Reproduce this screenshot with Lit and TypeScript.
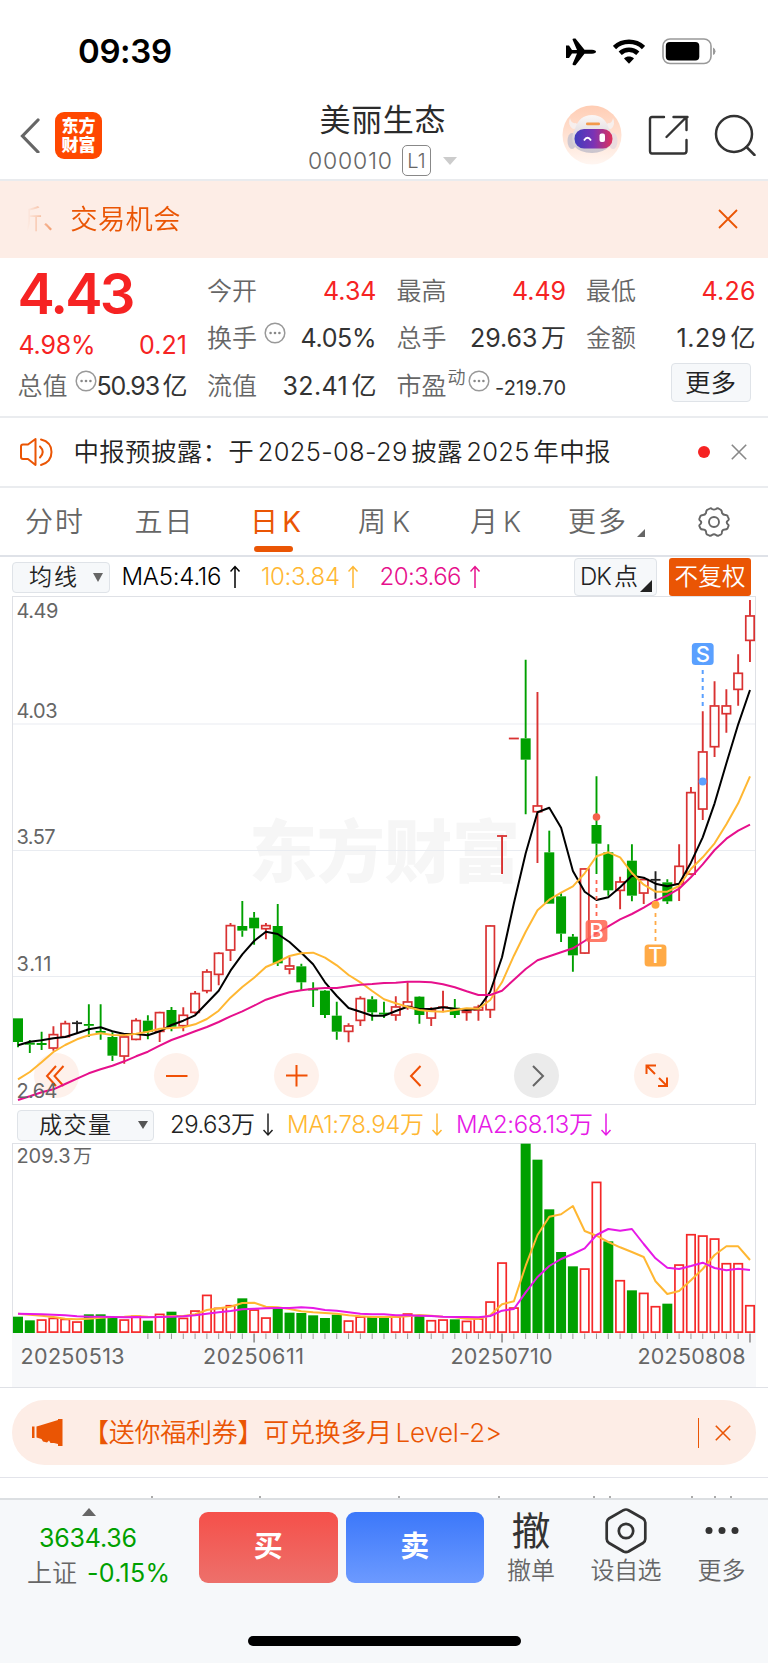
import { LitElement, html, svg, css } from "lit";
import { customElement, property } from "lit/decorators.js";

type Kind = "r" | "g" | "k";

/** Text set to an exact advance width by distributing letter spacing.
 *  Han and Latin runs are separated by a small gap unless `tight` is set. */
@customElement("fit-text")
class FitText extends LitElement {
  @property() t = "";
  @property({ type: Number }) w = 0;
  @property({ type: Boolean }) tight = false;
  static styles = css`
    :host { display: block; flex: none; white-space: pre; }
    span { display: inline-block; }
    i { font-style: normal; margin-left: 0.14em; }
  `;
  render() {
    const runs = this.tight ? [this.t] : this.t.match(/[\u3000-\u9fff\uff00-\uffef]+|[^\u3000-\u9fff\uff00-\uffef]+/g) ?? [];
    return html`<span>${runs.map((r, i) => (i ? html`<i>${r}</i>` : r))}</span>`;
  }
  updated() {
    const span = this.renderRoot.querySelector("span") as HTMLElement;
    span.style.letterSpacing = "0px";
    const natural = span.getBoundingClientRect().width;
    const n = Math.max(1, [...this.t].length - 1);
    const gap = (this.w - natural) / n;
    span.style.letterSpacing = gap + "px";
    this.style.width = this.w + "px";
  }
}

const STEP = 11.806;
const X0 = 18;
const cx = (i: number) => X0 + i * STEP;
const ky = (v: number) => 595 + v / 3;
const vy = (v: number) => 1100 + v / 3;

// kind, wick top, wick bottom, body top, body bottom
const CANDLES: [Kind, number, number, number, number][] = [
  ["g", 1270, 1357, 1270, 1341], ["g", 1335, 1374, 1343, 1349], ["g", 1310, 1365, 1344, 1350],
  ["r", 1294, 1367, 1318, 1360], ["r", 1277, 1328, 1285, 1326], ["k", 1277, 1314, 1283, 1286],
  ["g", 1228, 1326, 1287, 1292], ["g", 1228, 1334, 1308, 1313], ["g", 1312, 1398, 1326, 1382],
  ["r", 1322, 1406, 1325, 1384], ["r", 1270, 1336, 1276, 1334], ["g", 1261, 1333, 1277, 1311],
  ["r", 1250, 1341, 1252, 1310], ["g", 1236, 1309, 1245, 1295], ["r", 1237, 1309, 1260, 1293],
  ["r", 1188, 1256, 1195, 1253], ["r", 1123, 1195, 1130, 1188], ["r", 1072, 1171, 1074, 1139],
  ["r", 984, 1098, 991, 1066], ["g", 918, 1025, 993, 1007], ["g", 951, 1049, 968, 1000],
  ["r", 984, 1033, 991, 1002], ["g", 927, 1113, 993, 1105], ["r", 1087, 1138, 1112, 1123],
  ["g", 1106, 1185, 1114, 1162], ["g", 1162, 1236, 1181, 1185], ["g", 1185, 1269, 1187, 1260],
  ["g", 1220, 1334, 1262, 1310], ["r", 1285, 1342, 1292, 1310], ["r", 1204, 1293, 1210, 1277],
  ["g", 1204, 1277, 1213, 1252], ["g", 1220, 1269, 1253, 1258], ["r", 1204, 1277, 1235, 1261],
  ["r", 1162, 1244, 1220, 1235], ["g", 1204, 1286, 1205, 1260], ["r", 1237, 1293, 1244, 1270],
  ["r", 1187, 1252, 1235, 1238], ["g", 1212, 1269, 1238, 1260], ["r", 1244, 1277, 1247, 1253],
  ["r", 1229, 1277, 1236, 1246], ["r", 990, 1269, 992, 1245], ["r", 721, 837, 722, 724],
  ["r", 429, 431, 430, 431], ["g", 194, 658, 430, 494], ["r", 291, 804, 632, 651],
  ["g", 707, 926, 772, 926], ["g", 895, 1041, 904, 1016], ["g", 1017, 1130, 1025, 1081],
  ["r", 820, 1077, 821, 1075], ["g", 544, 837, 690, 746], ["g", 748, 902, 772, 886],
  ["r", 845, 943, 860, 887], ["g", 748, 919, 797, 902], ["r", 850, 927, 853, 895],
  ["k", 829, 911, 853, 856], ["g", 853, 927, 862, 919], ["r", 748, 918, 813, 868],
  ["r", 576, 841, 592, 838], ["r", 349, 675, 470, 643], ["r", 259, 486, 332, 456],
  ["r", 283, 413, 332, 357], ["r", 178, 332, 234, 284], ["r", 15, 201, 62, 137],
];

const MA5 = [1351,1340,1336,1330,1326,1315,1303,1297,1309,1317,1317,1321,1309,1290,1277,1261,1224,1187,1127,1078,1038,1010,1017,1041,1073,1108,1162,1203,1239,1250,1262,1262,1248,1235,1242,1242,1237,1241,1245,1241,1190,1087,925,775,652,638,698,828,890,915,907,877,842,848,866,874,866,803,727,625,505,388,285];
const MA10 = [1453,1431,1402,1371,1350,1333,1321,1315,1320,1321,1316,1310,1301,1299,1297,1288,1272,1247,1208,1176,1148,1116,1101,1083,1075,1073,1088,1111,1140,1162,1188,1213,1225,1236,1245,1249,1250,1245,1240,1241,1215,1162,1082,1010,946,914,893,874,835,784,772,787,834,869,890,890,873,822,787,745,688,625,544];
const MA20 = [1515,1504,1492,1483,1467,1451,1435,1423,1412,1399,1384,1370,1352,1335,1322,1309,1296,1281,1264,1249,1232,1214,1202,1192,1186,1181,1179,1179,1174,1169,1167,1164,1163,1160,1160,1162,1168,1177,1189,1200,1200,1187,1154,1122,1096,1084,1072,1060,1038,1014,994,973,957,938,917,902,881,847,808,765,731,707,689];

const VOLS = "g650 g661 r659 r654 r657 r665 g643 g643 g653 r659 r648 g662 r642 g635 r654 r632 r585 r624 r616 g595 r629 r653 g625 g638 g639 g646 g654 g644 r662 r650 g650 g651 r650 r641 g648 r661 r659 g658 r663 r656 r605 r488 r623 g131 g179 g328 g456 g499 r506 r246 g424 r541 g571 r579 r619 g611 r494 r403 r407 r416 r490 r490 r616"
  .split(" ")
  .map((s) => ({ kind: s[0] as Kind, top: Number(s.slice(1)) }));
const VMA1 = [641,644,647,651,656,658,656,653,651,650,648,650,651,648,648,643,630,625,620,609,608,620,622,627,634,637,639,641,646,649,651,651,651,649,645,647,650,652,656,657,646,613,604,497,405,350,343,318,393,407,426,442,456,471,544,582,573,541,507,465,439,439,480];
const VMA2 = [641,642,643,644,646,649,650,650,651,652,651,652,651,650,649,646,641,637,633,628,626,625,624,624,622,624,630,632,637,641,643,643,646,646,647,648,650,651,651,652,648,632,627,577,531,498,477,462,445,405,387,392,387,432,475,503,507,498,488,504,511,506,510];

const line = (vals: number[], y: (v: number) => number, color: string) =>
  svg`<polyline points=${vals.map((v, i) => `${cx(i).toFixed(1)},${y(v).toFixed(1)}`).join(" ")} fill="none" stroke=${color} stroke-width="2" stroke-linejoin="round"/>`;

const label = (x: number, y: number, w: number, text: string, size = 20) =>
  svg`<text x=${x} y=${y} font-size=${size} textLength=${w} fill="#666">${text}</text>`;

const COLORS = { r: "#d93232", g: "#00a000", k: "#222" };

const candle = ([k, hi, lo, top, bot]: [Kind, number, number, number, number], i: number) => {
  const x = cx(i), c = COLORS[k];
  const t = ky(top), b = ky(bot);
  const flat = bot - top < 4;
  return svg`
    <path d=${`M${x} ${ky(hi)}V${t}M${x} ${b}V${ky(lo)}`} stroke=${c} stroke-width="1.9"/>
    ${k === "r" && !flat
      ? svg`<rect x=${x - 4.2} y=${t + 0.3} width="8.4" height=${Math.max(b - t - 0.6, 1)} fill="none" stroke=${c} stroke-width="1.7"/>`
      : svg`<rect x=${x - 5} y=${flat ? (t + b) / 2 - 0.9 : t} width="10" height=${Math.max(b - t, 1.8)} fill=${c}/>`}`;
};

const tag = (i: number, y: number, color: string, ch: string, opacity = 1) =>
  svg`<g opacity=${opacity}><rect x=${cx(i) - 10.9} y=${y} width="21.8" height="22" rx="3.5" fill=${color}/>
  <text x=${cx(i)} y=${y + 18.8} font-size="22" font-weight="500" fill="#fff" text-anchor="middle">${ch}</text></g>`;

@customElement("kline-chart")
class KlineChart extends LitElement {
  static styles = css`
    :host { display: block; position: relative; height: 509px; }
    svg { display: block; }
    .plot { position: relative; z-index: 1; pointer-events: none; }
    text { font-family: Inter, "Noto Sans CJK SC", sans-serif; }
    .controls { position: absolute; left: 33.5px; bottom: 7px; display: flex; gap: 75.1px; }
    .btn { width: 45px; height: 45px; border-radius: 50%; background: #fef1eb; }
    .btn.off { background: #ebebeb; }
  `;
  render() {
    const icons = [
      "M22 13L13 23L22 33M29.5 13L20.5 23L29.5 33",
      "M12 23H33.5",
      "M12 22.5H33.5M22.5 12V33.5",
      "M26.5 13L17 23L26.5 33",
      "M19 13L29 23L19 33",
      "M12.5 21V12.5H22M12.5 12.5L21 21M33 24.500V33H24M33 33L25 25",
    ];
    return html`
      <svg class="plot" width="768" height="509" viewBox="0 596 768 509">
        <text x="249" y="877" font-size="68" font-weight="900" textLength="271" fill="#f6f6f6">东方财富</text>
        <path d="M12.500 724H756M12.500 850.500H756M12.500 976.500H756" stroke="#e9ecf1" stroke-width="1.200"/>
        <rect x="12.500" y="596.500" width="743" height="508" fill="none" stroke="#dfe1e6"/>
        ${label(16.5, 617.7, 42, "4.49")}${label(16.5, 717.7, 41, "4.03")}${label(16.5, 844, 39, "3.57")}
        ${label(16.5, 971, 35, "3.11")}
        ${CANDLES.map(candle)}
        ${line(MA5, ky, "#000")}${line(MA10, ky, "#ffb732")}${line(MA20, ky, "#e6108c")}
        <path d="M702.700 670V707" stroke="#5aa0ff" stroke-width="2" stroke-dasharray="4 4"/>
        <circle cx="702.700" cy="781.500" r="4" fill="#5aa0ff"/>
        <path d="M596.500 880V917" stroke="#ff6450" stroke-width="1.800" stroke-dasharray="4 4"/>
        <circle cx="596.500" cy="817" r="3.800" fill="#f5604c"/>
        <path d="M655.500 913V941" stroke="#ffaa46" stroke-width="1.800" stroke-dasharray="4 4"/>
        <circle cx="655.500" cy="904.700" r="4" fill="#ffa53c"/>
        ${tag(58, 643, "#5aa0ff", "S")}${tag(49, 920, "#ff6450", "B", 0.85)}${tag(54, 944.5, "#ffaa46", "T")}
        ${label(16.5, 1098, 41, "2.64")}
      </svg>
      <div class="controls">
        ${icons.map((d, i) => html`<div class="btn ${i === 4 ? "off" : ""}">
          <svg width="45" height="45" viewBox="0 0 45 45"><path d=${d} fill="none" stroke=${i === 4 ? "#666" : "#f05005"} stroke-width="2"/></svg>
        </div>`)}
      </div>`;
  }
}

@customElement("volume-chart")
class VolumeChart extends LitElement {
  static styles = css`
    :host { display: block; height: 245px; border-bottom: 1px solid #dfe1e6; box-sizing: border-box; }
    svg { display: block; }
    text { font-family: Inter, "Noto Sans CJK SC", sans-serif; font-weight: 400; }
  `;
  render() {
    return html`<svg width="768" height="244" viewBox="0 1143 768 244">
      <rect x="12.500" y="1143.500" width="743" height="189.500" fill="#fff" stroke="#dfe1e6"/>
      <rect x="12" y="1333" width="744" height="54.500" fill="#f7f8fa"/>
      ${label(16.5, 1163, 54, "209.3", 20)}${label(73, 1163, 19, "万", 19)}
      ${VOLS.map((v, i) => {
        const x = cx(i), t = vy(v.top), h = 1333 - t;
        return v.kind === "g"
          ? svg`<rect x=${x - 5} y=${t} width="10" height=${h} fill="#00a000"/>`
          : svg`<rect x=${x - 4.2} y=${t + 0.4} width="8.4" height=${h - 1.3} fill="#fff" stroke="#f52828" stroke-width="1.700"/>`;
      })}
      ${VOLS.map((_, i) => i < 11 ? null
        : svg`<path d=${`M${cx(i)} 1333.500V${i === 20 || i === 41 || i === 62 ? 1342.5 : 1339}`} stroke="#999" stroke-width=${i === 20 || i === 41 || i === 62 ? 1.8 : 1}/>`)}
      ${line(VMA1, vy, "#ffb732")}${line(VMA2, vy, "#e619e6")}
      ${label(20.5, 1363.6, 104, "20250513", 21.5)}${label(203, 1363.6, 101, "20250611", 21.5)}
      ${label(450.5, 1363.6, 102, "20250710", 21.5)}${label(637.5, 1363.6, 108, "20250808", 21.5)}
    </svg>`;
  }
}

const ft = (t: string, w: number, cls = "", tight = false) =>
  html`<fit-text class=${cls} .t=${t} .w=${w} .tight=${tight}></fit-text>`;
const dots = html`<svg class="info" width="22" height="22" viewBox="0 0 22 22"><circle cx="11" cy="11" r="9.800" fill="none" stroke="#999" stroke-width="1.500"/><g fill="#888"><circle cx="6.600" cy="11" r="1.300"/><circle cx="11" cy="11" r="1.300"/><circle cx="15.400" cy="11" r="1.300"/></g></svg>`;
const arrow = (up: boolean) => html`<svg width="11" height="24" viewBox="0 0 11 24"><path d=${up ? "M5 23V1.500M.5 6.500L5 1.500L9.500 6.500" : "M5 .5V22M.5 17L5 22L9.500 17"} fill="none" stroke="currentColor" stroke-width="1.500"/></svg>`;
const cross = (s: number, w: number) => html`<svg width=${s} height=${s} viewBox="0 0 20 20"><path d="M1 1L19 19M19 1L1 19" fill="none" stroke="currentColor" stroke-width=${w}/></svg>`;

@customElement("app-root")
class AppRoot extends LitElement {
  static styles = css`
    :host { display: block; width: 768px; height: 1663px; overflow: hidden; background: #fff; color: #333;
      font-family: Inter, "Noto Sans CJK SC", sans-serif; font-size: 25px; line-height: 30px; }
    * { box-sizing: border-box; }
    svg { display: block; flex: none; }
    .row { display: flex; align-items: center; }
    .status { height: 103px; padding: 0 52px 0 78px; justify-content: space-between; color: #000; }
    .clock { font-size: 33px; font-weight: 600; margin-top: -1px; }
    .wifi { margin: 0 17px; }
    .nav { height: 78px; display: grid; grid-template-columns: 280px 1fr 205px; border-bottom: 2px solid #e9ebee; padding: 0 12px 0 20px; }
    .nav .left { gap: 15px; padding-bottom: 11px; display: flex; align-items: center; height: 76px; }
    .logo { width: 47px; height: 47px; border-radius: 9px; background: #ff4800; color: #fff; font-size: 17px; font-weight: 900; line-height: 19px; padding: 5px 0 0 6.500px; }
    .title { padding-top: 1px; }
    .name { font-size: 31px; line-height: 32px; margin-left: 19.500px; font-weight: 400; color: #2b2b2b; }
    .code { height: 32px; margin: 8.500px 0 0 8px; color: #666; font-size: 23px; font-weight: 350; }
    .l1 { width: 29px; height: 31px; border: 1.500px solid #888; border-radius: 5px; margin: 0 12px 0 10px; display: flex; justify-content: center; align-items: center; font-size: 20px; }
    .tools { padding-bottom: 12px; height: 76px; gap: 25px; justify-content: flex-end; }
    .banner { height: 77px; padding: 0 30px 0 15px; color: #ea5504; background: #fdede6; justify-content: space-between; font-size: 27.300px; font-weight: 350; }
    .banner svg { margin-top: -1px; }
    .fade { mask-image: linear-gradient(90deg, transparent 12px, rgba(0,0,0,.45) 34px, #000 56px); -webkit-mask-image: linear-gradient(90deg, transparent 12px, rgba(0,0,0,.45) 34px, #000 56px); }
    .stats { height: 160px; display: flex; gap: 21px; padding: 9px 12.500px 0 18.500px; border-bottom: 2px solid #eaecef; font-weight: 400; }
    .col { flex: 1 1 0; min-width: 0; }
    .stats .row { height: 47.500px; justify-content: space-between; color: #333; }
    .stats .row .lab { color: #666; font-weight: 350; margin-left: -1px; }
    .lab, .val { display: flex; align-items: center; }
    .info { margin-left: 7px; margin-top: -10px; }
    .eff { margin-left: 2px; }
    .stats .red, .stats .row.red { color: #f62323; }
    .stats .price { height: 56px; font-size: 56px; font-weight: 600; line-height: 55px; color: #f62323; margin-left: -1px; }
    .stats .pct { height: 44px; }
    .stats .cap { height: 38px; }
    .small { font-size: 20px; padding-top: 5px; }
    .sup { font-size: 18px; margin: -16px 0 0 1px; }
    .stats .end { justify-content: flex-end; padding-right: 5px; }
    .more { width: 80px; height: 39px; border: 1.500px solid #dfe3e8; border-radius: 4px; background: #f6f8fa; display: flex; align-items: center; justify-content: center; font-size: 25.500px; margin-top: -6px; font-weight: 350; color: #222; }
    .notice { height: 70px; padding: 0 21px 0 19.500px; border-bottom: 2px solid #eaecef; font-size: 25.500px; color: #222; font-weight: 350; }
    .notice .txt { margin-left: 21px; flex: 1; }
    .grey { color: #888; }
    .dot { width: 12px; height: 12px; border-radius: 50%; background: #f62323; margin-right: 21px; }
    .tabs { height: 69px; border-bottom: 2px solid #dfe2e8; padding-left: 25px; color: #666; font-size: 28px; font-weight: 350; }
    .tab { height: 69px; display: flex; align-items: center; padding-top: 1px; }
    .tab.on { color: #ea5504; flex-direction: column; align-items: flex-start; padding: 20px 0 0 0; font-weight: 400; }
    .tabs .t1 { width: 109.500px; } .tabs .t2 { width: 115.500px; } .tabs .t3 { width: 108px; } .tabs .t4 { width: 112px; } .tabs .t5 { width: 98px; }
    .corner { margin: 22px 0 0 11px; }
    .gear { margin-left: 53px; }
    .bar { width: 39px; height: 5.500px; border-radius: 3px; background: #ea5504; margin: 9px 0 0 4px; }
    .bars { height: 39px; padding: 1px 17px 0 12px; font-weight: 350; font-size: 24px; color: #000; }
    .sel { height: 31px; border: 1.500px solid #dfe3e8; border-radius: 4px; background: #f6f8fa; display: flex; align-items: center; justify-content: space-between; color: #222; font-size: 23px; }
    .ma { width: 98px; padding: 0 6px 0 16px; }
    .vol { width: 137px; padding: 0 5px 0 21px; }
    .val { gap: 8px; }
    .dk { width: 83px; height: 38px; padding: 0 4px 0 5px; margin-left: auto; font-size: 24px; }
    .dk svg { align-self: flex-end; margin-bottom: 3px; }
    .fq { width: 82px; height: 38px; border-radius: 3px; background: #ea5504; color: #fff; margin-left: 12px; display: flex; align-items: center; justify-content: center; font-size: 23.500px; }
    .orange { color: #ffb732; } .mag { color: #e6108c; } .pur { color: #e619e6; }
    .m12 { margin-left: 11.500px; } .m13 { margin-left: 13px; } .m16 { margin-left: 16px; } .m21 { margin-left: 20.500px; }
    .volbar { height: 38px; padding: 2px 0 0 17px; font-size: 24px; font-weight: 350; color: #222; }
    .promoWrap { height: 90px; padding: 12px 12px 0; border-bottom: 1.500px solid #e3e4ea; }
    .promo { height: 65px; border-radius: 33px; background: #fdede6; color: #ea5504; padding: 0 25px 0 20px; font-size: 26px; font-weight: 350; }
    .promo .txt { margin-left: 20px; flex: 1; }
    .divider { width: 1.500px; height: 30px; background: #ea5504; margin-right: 16px; }
    .peek { height: 20px; display: flex; align-items: flex-end; }
    .peek i { width: 2px; height: 2px; background: #aaa; }
    .bottom { height: 165px; border-top: 2px solid #dcdfe2; background: #f6f8fa; display: flex; padding-top: 11.500px; font-weight: 400; position: relative; }
    .index { width: 199px; color: #00a000; padding: 0 0 0 27px; }
    .index .tri { margin: -4px 0 0 55px; }
    .index .num { margin: 7px 0 0 12px; }
    .index .row { gap: 10px; margin-top: 5px; height: 30px; }
    .index .sh { color: #666; font-weight: 350; }
    .trade { height: 71px; border-radius: 9px; color: #fff; font-size: 29px; font-weight: 700; display: flex; align-items: center; justify-content: center; width: 138.500px; }
    .buy { background: linear-gradient(#f5504a, #ed706b); margin-right: 8px; }
    .sell { background: linear-gradient(#3c78fa, #6c9aff); }
    .act { display: flex; flex-direction: column; align-items: center; color: #666; font-size: 24px; font-weight: 350; height: 74px; justify-content: space-between; }
    .act .big { font-size: 39px; line-height: 38px; color: #333; font-weight: 400; }
    .a1 { margin-left: 23px; } .a2 { margin-left: 35.500px; } .a3 { margin-left: 36px; }
    .hex { margin-top: -4px; }
    .home { position: absolute; left: 247.500px; bottom: 17px; width: 273.500px; height: 10px; border-radius: 5px; background: #000; }
  `;

  render() {
    return html`
      <div class="status row">
        <div class="clock">${ft("09:39", 94)}</div>
        <div class="row">
          <svg width="31" height="28" viewBox="0 0 31 28"><path d="M1 7.500L4 7.500L7 12L12 12L7.500 1.500Q7.500 .5 9 .5L10.500 .5L19.500 11.800L27 11.800Q31 12.300 31 13.800Q31 15.300 27 15.800L19.500 15.800L10.500 27.300L9 27.300Q7.500 27.300 7.500 26L12 15.600L7 15.600L4 20L1 20L1 16Z"/></svg>
          <svg class="wifi" width="32" height="26" viewBox="0 0 32 26"><g fill="none" stroke="#000" stroke-width="4.600"><path d="M1.500 8.500C9.500 .9 22.500 .9 30.500 8.500"/><path d="M7.200 14.200C12.200 9.500 19.800 9.500 24.800 14.200"/></g><path d="M11 19.500C13.800 16.900 18.200 16.900 21 19.500L16 24.800Z"/></svg>
          <svg width="54" height="27" viewBox="0 0 54 27"><rect x="1" y="1" width="48" height="24.500" rx="7" fill="none" stroke="#999" stroke-width="1.600"/><rect x="3.800" y="4" width="33.500" height="18.500" rx="4"/><path d="M51 9.500Q53.500 10.500 53.500 13.300Q53.500 16 51 17Z" fill="#999"/></svg>
        </div>
      </div>
      <div class="nav">
        <div class="left">
          <svg width="20" height="35" viewBox="0 0 20 35"><path d="M18 2L2.500 18L18 34" fill="none" stroke="#666" stroke-width="3.200" stroke-linecap="round"/></svg>
          <div class="logo">${ft("东方", 34)}${ft("财富", 34)}</div>
        </div>
        <div class="title">
          <div class="name">${ft("美丽生态", 126)}</div>
          <div class="code row">${ft("000010", 84)}<div class="l1">L1</div>
            <svg width="14" height="8" viewBox="0 0 14 8"><path d="M0 0H14L7 8Z" fill="#ccc"/></svg></div>
        </div>
        <div class="tools row">
          <svg width="60" height="60" viewBox="0 0 60 60">
            <defs>
              <linearGradient id="bg" x1="0" y1="0" x2="0" y2="1"><stop offset="0" stop-color="#ffcdb4"/><stop offset="1" stop-color="#fff6f1"/></linearGradient>
              <linearGradient id="visor"><stop offset="0" stop-color="#3f3dbd"/><stop offset=".5" stop-color="#7b33b5"/><stop offset="1" stop-color="#e0325a"/></linearGradient>
              <linearGradient id="head" x1="0" y1="0" x2="0" y2="1"><stop offset="0" stop-color="#fbf7f6"/><stop offset="1" stop-color="#c9c3cc"/></linearGradient>
            </defs>
            <circle cx="30" cy="30" r="29.500" fill="url(#bg)"/>
            <path d="M8 13Q9 19 14 18L18 23L11 24Q5 20 8 13ZM51 13Q50 19 46 18L42 23L49 24Q54 20 51 13Z" fill="#f7efed"/>
            <ellipse cx="10" cy="36" rx="4.500" ry="8" fill="#cfc8d0"/><ellipse cx="51" cy="36" rx="4.500" ry="8" fill="#eadcdf"/>
            <path d="M13 24Q17 10 30 10Q43 10 47 24Q53 32 48 41Q41 48 30 48Q18 48 12 41Q8 32 13 24Z" fill="url(#head)"/>
            <rect x="24" y="17.500" width="14" height="2.800" rx="1.300" fill="#f39a4c"/>
            <rect x="12.500" y="24" width="38" height="19.500" rx="9.500" fill="url(#visor)"/>
            <path d="M22 35.500Q25.500 30 29 35.500" fill="none" stroke="#fff" stroke-width="1.800"/>
            <rect x="37.500" y="28.500" width="5.500" height="8.500" rx="2" fill="#fff"/>
          </svg>
          <svg width="42" height="42" viewBox="0 0 42 42"><g fill="none" stroke="#333" stroke-width="2.400" stroke-linecap="round" stroke-linejoin="round"><path d="M17 3H5Q3 3 3 5V37Q3 39.500 5 39.500H37Q39.500 39.500 39.500 37V26"/><path d="M26.500 3H40.500M39.500 3V16M39.500 3L19.500 23"/></g></svg>
          <svg width="42" height="42" viewBox="0 0 42 42"><g fill="none" stroke="#333" stroke-width="2.500" stroke-linecap="round"><circle cx="20" cy="20" r="18"/><path d="M32.500 33L40.500 41"/></g></svg>
        </div>
      </div>
      <div class="banner row">
        <div class="fade">${ft("析、交易机会", 165.5)}</div>${cross(20, 1.8)}
      </div>
      <div class="stats">
        <div class="col">
          <div class="price">${ft("4.43", 118)}</div>
          <div class="row pct red">${ft("4.98%", 77)}${ft("0.21", 48)}</div>
          <div class="row cap"><div class="lab">${ft("总值", 50)}${dots}</div>${ft("50.93亿", 91)}</div>
        </div>
        <div class="col">
          <div class="row"><div class="lab">${ft("今开", 50)}</div>${ft("4.34", 53.5, "red")}</div>
          <div class="row"><div class="lab">${ft("换手", 50)}${dots}</div>${ft("4.05%", 76)}</div>
          <div class="row"><div class="lab">${ft("流值", 50)}</div>${ft("32.41亿", 94)}</div>
        </div>
        <div class="col">
          <div class="row"><div class="lab">${ft("最高", 50)}</div>${ft("4.49", 54, "red")}</div>
          <div class="row"><div class="lab">${ft("总手", 50)}</div>${ft("29.63万", 96)}</div>
          <div class="row"><div class="lab">${ft("市盈", 50)}${ft("动", 18, "sup")}<svg class="info eff" width="22" height="22" viewBox="0 0 22 22"><circle cx="11" cy="11" r="9.800" fill="none" stroke="#999" stroke-width="1.500"/><g fill="#888"><circle cx="6.600" cy="11" r="1.300"/><circle cx="11" cy="11" r="1.300"/><circle cx="15.400" cy="11" r="1.300"/></g></svg></div>${ft("-219.70", 71, "small")}</div>
        </div>
        <div class="col">
          <div class="row"><div class="lab">${ft("最低", 50)}</div>${ft("4.26", 54, "red")}</div>
          <div class="row"><div class="lab">${ft("金额", 50)}</div>${ft("1.29亿", 79)}</div>
          <div class="row end"><div class="more">更多</div></div>
        </div>
      </div>
      <div class="notice row">
        <svg width="33" height="30" viewBox="0 0 33 30"><g fill="none" stroke="#ea5504" stroke-width="2" stroke-linecap="round" stroke-linejoin="round"><path d="M15.500 2L8 7.500H3Q1 7.500 1 9.500V20Q1 22 3 22H8L15.500 28Z"/><path d="M20 9.500Q25.500 15 20 20.500M21 2.500Q31.500 5 31.500 15Q31.500 25 21 28"/></g></svg>
        <div class="txt">${ft("中报预披露：于2025-08-29披露2025年中报", 537)}</div>
        <div class="dot"></div><div class="grey">${cross(16, 2)}</div>
      </div>
      <div class="tabs row">
        <div class="tab t1">${ft("分时", 58)}</div>
        <div class="tab t2">${ft("五日", 58)}</div>
        <div class="tab on t3">${ft("日K", 51)}<div class="bar"></div></div>
        <div class="tab t4">${ft("周K", 52)}</div>
        <div class="tab t5">${ft("月K", 51)}</div>
        <div class="tab">${ft("更多", 58)}<svg class="corner" width="8" height="8" viewBox="0 0 8 8"><path d="M8 0V8H0Z" fill="#666"/></svg></div>
        <svg class="gear" width="32" height="30" viewBox="0 0 32 30"><g fill="none" stroke="#666" stroke-width="1.900"><path d="M12 1.500Q13 1 14 2Q16 3.200 18 2Q19 1 20.500 1.500L23 3Q24 4 24 6Q25 8 27.500 8Q29.500 8 30 10L30.800 12Q31 13 29.500 14Q28 15.500 29.500 17Q31 18 30.500 19L29.500 21.500Q28.500 22.500 27 22.500Q24.500 22.500 24 24.500Q24 27 23 27.500L20.500 28.700Q19 29 18 28Q16 26.500 14 28Q13 29 11.500 28.700L9 27.500Q8 26.500 8 24.500Q7.500 22.500 5 22.500Q3 22.500 2.500 21.500L1.300 19Q1 18 2.500 17Q4 15.500 2.500 14Q1 13 1.300 12L2.500 9Q3 8 5 8Q7 8 8 6Q8 4 9 3Z"/><circle cx="16" cy="15" r="5"/></g></svg>
      </div>
      <div class="bars row">
        <div class="sel ma">${ft("均线", 48)}<svg width="10" height="9" viewBox="0 0 10 9"><path d="M0 0H10L5 9Z" fill="#666"/></svg></div>
        <div class="val m12">${ft("MA5:4.16", 100)}${arrow(true)}</div>
        <div class="val orange m21">${ft("10:3.84", 79)}${arrow(true)}</div>
        <div class="val mag m21">${ft("20:3.66", 82)}${arrow(true)}</div>
        <div class="sel dk">${ft("DK点", 58)}<svg width="12" height="12" viewBox="0 0 12 12"><path d="M12 0V12H0Z" fill="#222"/></svg></div>
        <div class="fq">${ft("不复权", 71)}</div>
      </div>
      <kline-chart></kline-chart>
      <div class="volbar row">
        <div class="sel vol">${ft("成交量", 72)}<svg width="10" height="8" viewBox="0 0 10 8"><path d="M0 0H10L5 8Z" fill="#555"/></svg></div>
        <div class="val m16">${ft("29.63万", 85, "", true)}${arrow(false)}</div>
        <div class="val orange m13">${ft("MA1:78.94万", 137, "", true)}${arrow(false)}</div>
        <div class="val pur m13">${ft("MA2:68.13万", 137, "", true)}${arrow(false)}</div>
      </div>
      <volume-chart></volume-chart>
      <div class="promoWrap">
        <div class="promo row">
          <svg width="31" height="27" viewBox="0 0 31 27"><path d="M0 7.500H2.500V19H0ZM4.500 7.500L8 6.500L26 1V0H30.500V27H26V25L22 24L18.500 24L17 21.500L15 23.500L11 22.500L9.500 20L4.500 18.500Z" fill="#ea5504"/></svg>
          <div class="txt">${ft("【送你福利券】可兑换多月Level-2>", 419)}</div>
          <div class="divider"></div>${cross(16, 2)}
        </div>
      </div>
      <div class="peek">
        ${[151, 259, 398, 498, 593, 609, 691, 714, 730].map((x, i, a) => html`<i style="margin-left:${i ? x - a[i - 1] - 2 : x}px"></i>`)}
      </div>
      <div class="bottom">
        <div class="index">
          <svg class="tri" width="14" height="8" viewBox="0 0 14 8"><path d="M7 0L14 8H0Z" fill="#666"/></svg>
          <div class="num">${ft("3634.36", 98)}</div>
          <div class="row"><span class="sh">${ft("上证", 50)}</span>${ft("-0.15%", 83)}</div>
        </div>
        <div class="trade buy">买</div>
        <div class="trade sell">卖</div>
        <div class="act a1">
          <div class="big">撤</div>${ft("撤单", 48)}
        </div>
        <div class="act a2">
          <svg class="hex" width="42" height="46" viewBox="0 0 42 46"><g fill="none" stroke="#333" stroke-width="2.700"><path d="M18.500 2.200Q21 .8 23.500 2.200L38 10.500Q40.300 12 40.300 14.500V31Q40.300 33.500 38 35L23.500 43.500Q21 44.800 18.500 43.500L4 35Q1.700 33.500 1.700 31V14.500Q1.700 12 4 10.500Z"/><circle cx="21" cy="23" r="7.200"/></g></svg>
          ${ft("设自选", 71)}
        </div>
        <div class="act a3">
          <svg width="34" height="38" viewBox="0 0 34 38"><g fill="#333"><circle cx="4" cy="18.500" r="3.500"/><circle cx="17" cy="18.500" r="3.500"/><circle cx="30" cy="18.500" r="3.500"/></g></svg>
          ${ft("更多", 48)}
        </div>
        <div class="home"></div>
      </div>`;
  }
}
